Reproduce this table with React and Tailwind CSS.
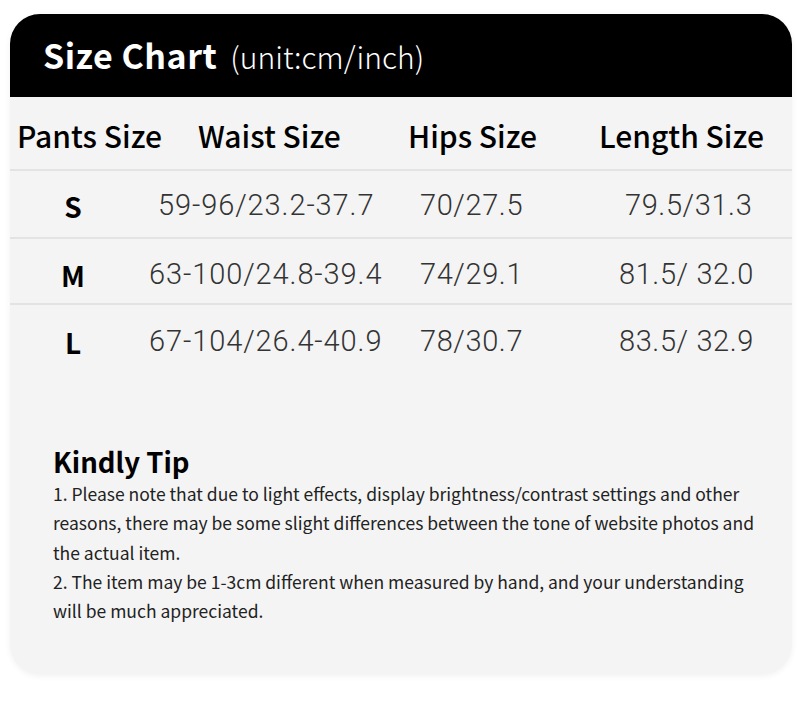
const rows = [
  { size: "S", waist: "59-96/23.2-37.7", hips: "70/27.5", length: "79.5/31.3", waistPad: "pl-[22px]", lenPad: "pl-[6px]", h: "h-[68px] pt-[3px]", border: true },
  { size: "M", waist: "63-100/24.8-39.4", hips: "74/29.1", length: "81.5/ 32.0", waistPad: "pl-[13px]", lenPad: "pl-0", h: "h-[66px] pt-[8px]", border: true },
  { size: "L", waist: "67-104/26.4-40.9", hips: "78/30.7", length: "83.5/ 32.9", waistPad: "pl-[13px]", lenPad: "pl-0", h: "h-[68px] pt-[6px]", border: false },
];

const cjk = { fontFamily: '"Noto Sans CJK SC", "Noto Sans", sans-serif' };
const num = { fontFamily: 'Roboto, "Liberation Sans", sans-serif' };

function Row({ r }) {
  return (
    <div className={`${r.h} flex items-center ${r.border ? "border-b-2 border-[#e3e3e3]" : ""}`}>
      <div className="w-[126px] text-center text-[28px] font-bold text-black">{r.size}</div>
      <div className={`w-[284px] ${r.waistPad} text-[29px] font-light text-[#333] tracking-[0.9px]`} style={num}>
        {r.waist}
      </div>
      <div className="w-[199px] text-[29px] font-light text-[#333] tracking-[0.6px]" style={num}>
        {r.hips}
      </div>
      <div className={`${r.lenPad} text-[29px] font-light text-[#333] tracking-[0.6px]`} style={num}>
        {r.length}
      </div>
    </div>
  );
}

export default function App() {
  return (
    <div className="w-[800px] h-[703px] bg-white pt-[14px] pl-[10px]" style={cjk}>
      <div className="w-[782px] h-[660px] bg-[#f4f4f4] rounded-[30px] overflow-hidden shadow-[0_2px_6px_rgba(0,0,0,0.06)]">
        <div className="h-[83px] bg-black flex items-center pl-[33px] pb-[2px] text-white">
          <span className="text-[34px] font-bold tracking-[0.5px]">Size Chart</span>
          <span className="text-[30px] font-light ml-[13px] mt-[4px]">(unit:cm/inch)</span>
        </div>

        <div className="h-[74px] flex items-center pl-[7px] pt-[4px] text-[30px] font-medium text-black border-b-2 border-[#e3e3e3]">
          <div className="w-[181px]">Pants Size</div>
          <div className="w-[210px]">Waist Size</div>
          <div className="w-[191px]">Hips Size</div>
          <div>Length Size</div>
        </div>

        {rows.map((r) => (
          <Row key={r.size} r={r} />
        ))}

        <div className="pl-[43px] pt-[70px] w-[745px]">
          <div className="text-[27.5px] font-bold text-black leading-[36px]">Kindly Tip</div>
          <div className="text-[17.5px] text-[#222] leading-[29.3px]">
            <p>1. Please note that due to light effects, display brightness/contrast settings and other reasons, there may be some slight differences between the tone of website photos and the actual item.</p>
            <p>2. The item may be 1-3cm different when measured by hand, and your understanding will be much appreciated.</p>
          </div>
        </div>
      </div>
    </div>
  );
}
